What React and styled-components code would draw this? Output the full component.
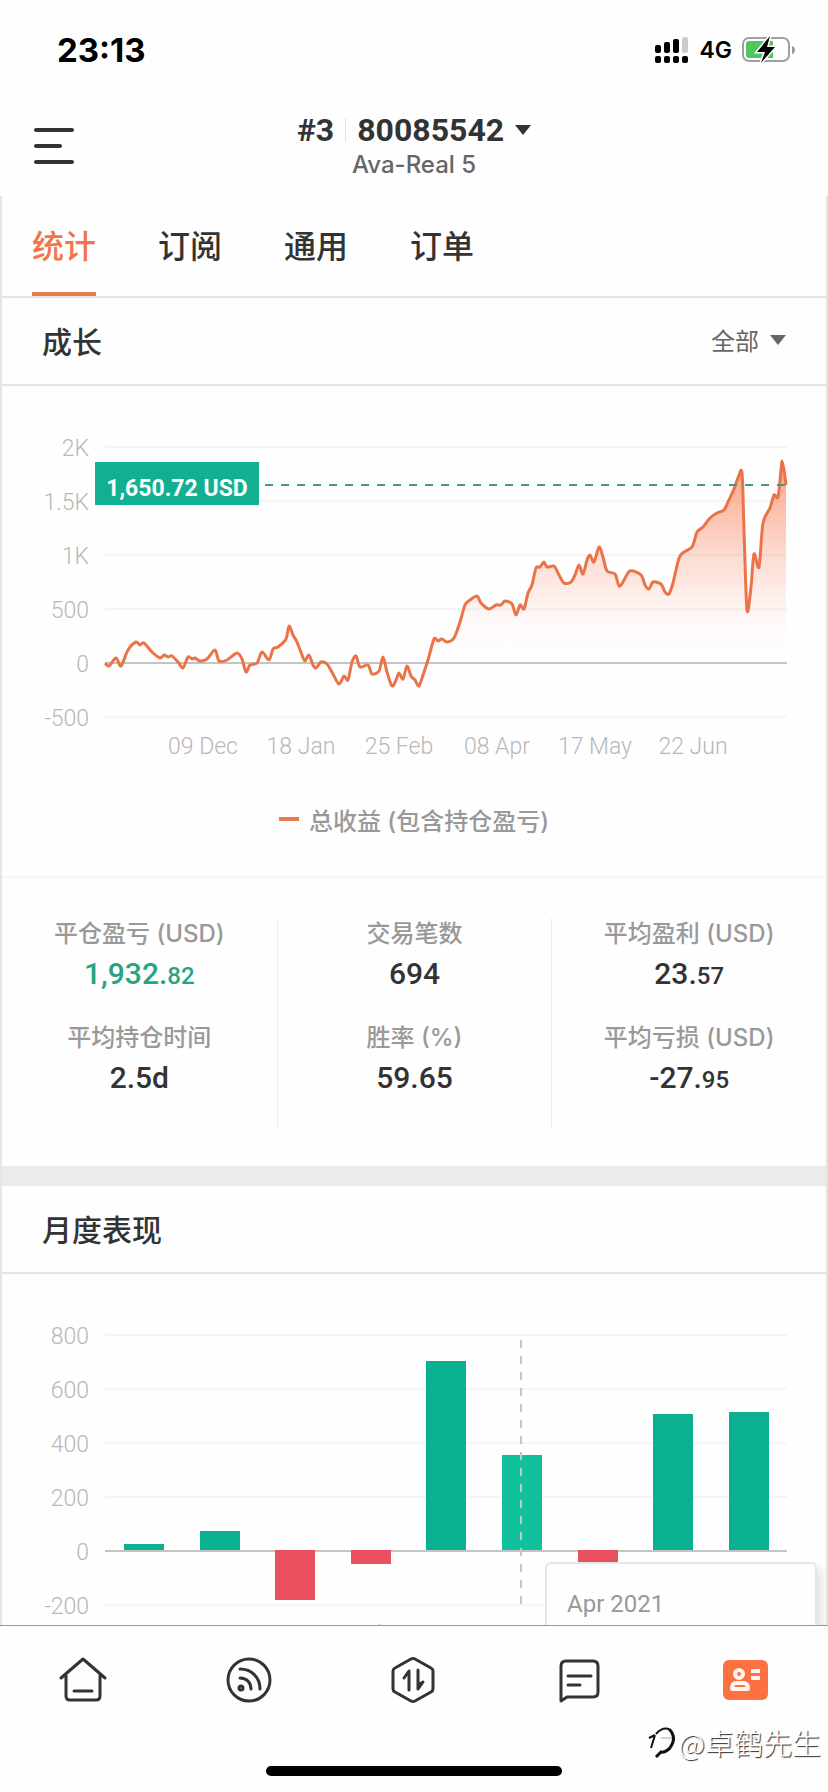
import React, { useState } from 'react';
import styled, { createGlobalStyle } from 'styled-components';

const GlobalStyle = createGlobalStyle`
  *, *::before, *::after { box-sizing: border-box; }
  body {
    margin: 0;
    background: #fefefe;
    color: #333;
    font-family: 'Inter', 'Noto Sans CJK SC', sans-serif;
  }
  button {
    margin: 0;
    padding: 0;
    border: 0;
    background: none;
    color: inherit;
    font: inherit;
    cursor: pointer;
  }
`;

const numberFont = "'Roboto', 'Noto Sans CJK SC', sans-serif";

const Screen = styled.div`
  position: relative;
  display: flex;
  flex-direction: column;
  height: 100vh;
  overflow: hidden;
`;

const StatusBar = styled.div`
  display: flex;
  justify-content: space-between;
  align-items: center;
  flex: none;
  height: 100px;
  padding: 0 33px 0 57px;
  color: #000;
`;

const Clock = styled.time`
  font-size: 33px;
  font-weight: 700;
`;

const StatusIcons = styled.div`
  display: flex;
  align-items: center;
  gap: 10px;
  font-size: 23px;
  font-weight: 600;
`;

const Header = styled.header`
  display: grid;
  grid-template-columns: 1fr auto 1fr;
  align-items: center;
  flex: none;
  height: 96px;
  padding: 0 34px 4px;
`;

const MenuButton = styled.button`
  display: flex;
  flex-direction: column;
  gap: 12px;
  width: 40px;
`;

const MenuLine = styled.span`
  width: ${props => (props.$short ? '28px' : '40px')};
  height: 4px;
  border-radius: 2px;
  background: #333;
`;

const Account = styled.div`
  display: flex;
  flex-direction: column;
  align-items: center;
`;

const AccountButton = styled.button`
  display: flex;
  align-items: center;
  font-family: ${numberFont};
  font-size: 32px;
  line-height: 38px;
  font-weight: 700;
`;

const AccountDivider = styled.span`
  width: 1px;
  height: 24px;
  margin: 0 11px;
  background: #e2e2e2;
`;

const Caret = styled.span`
  width: 0;
  height: 0;
  margin-left: 11px;
  border: 8px solid transparent;
  border-top: 10px solid ${props => props.$color || '#333'};
  border-bottom: 0;
`;

const Server = styled.div`
  color: #666;
  font-size: 24px;
  line-height: 32px;
  font-weight: 500;
`;

const Content = styled.main`
  flex: 1;
  min-height: 0;
  overflow: hidden;
  border: solid #e5e5e5;
  border-width: 0 2px;
`;

const Tabs = styled.nav`
  display: flex;
  gap: 62px;
  height: 102px;
  padding: 0 30px;
  border-bottom: 2px solid #e5e5e5;
`;

const Tab = styled.button`
  border-bottom: 4px solid ${props => (props.$active ? '#e77a4f' : 'transparent')};
  color: ${props => (props.$active ? '#f2754a' : '#333')};
  font-size: 32px;
  font-weight: 500;
`;

const SectionHead = styled.div`
  display: flex;
  justify-content: space-between;
  align-items: center;
  height: 88px;
  padding: 0 40px 3px;
  border-bottom: 2px solid #e5e5e5;
`;

const SectionTitle = styled.h2`
  margin: 0;
  font-size: 30px;
  font-weight: 500;
`;

const RangeButton = styled.button`
  display: flex;
  align-items: center;
  color: #666;
  font-size: 24px;
`;

const Chart = styled.svg`
  display: block;
  width: 100%;
  height: auto;
  font-family: ${numberFont};
`;

const AxisText = styled.text`
  fill: #b8b8b8;
  font-size: 23px;
  font-weight: 300;
`;

const Legend = styled.div`
  display: flex;
  justify-content: center;
  align-items: center;
  gap: 10px;
  height: 112px;
  padding-bottom: 4px;
  border-bottom: 2px solid #f5f5f5;
  color: #999;
  font-size: 24px;
  font-weight: 500;
`;

const LegendMark = styled.span`
  width: 20px;
  height: 4px;
  background: #ea7850;
`;

const Stats = styled.section`
  display: grid;
  grid-template-columns: repeat(3, 1fr);
  padding: 40px 0 38px;
  border-bottom: 20px solid #ebebeb;
`;

const StatColumn = styled.dl`
  margin: 0;
  height: 210px;
  text-align: center;

  & + & {
    border-left: 1px solid #eee;
  }
`;

const StatLabel = styled.dt`
  height: 32px;
  color: #999;
  font-size: 24px;
  line-height: 32px;
  font-weight: 500;
`;

const StatValue = styled.dd`
  height: 48px;
  margin: 0 0 24px;
  color: ${props => (props.$positive ? '#27a583' : '#333')};
  font-family: ${numberFont};
  font-size: 30px;
  line-height: 48px;
  font-weight: 500;
`;

const Cents = styled.span`
  font-size: 24px;
`;

const MonthlyPlot = styled.div`
  position: relative;
`;

const Tooltip = styled.div`
  position: absolute;
  top: 288px;
  right: 9px;
  width: 33%;
  height: 160px;
  padding: 24px 20px;
  border: 2px solid #e6e6e6;
  border-radius: 6px;
  background: #fefefe;
  box-shadow: 6px 6px 10px rgba(0, 0, 0, 0.1);
  color: #999;
  font-family: ${numberFont};
  font-size: 24px;
  line-height: 32px;
`;

const BottomNav = styled.nav`
  display: grid;
  grid-template-columns: repeat(5, 1fr);
  justify-items: center;
  align-items: start;
  flex: none;
  height: 167px;
  padding-top: 27px;
  border-top: 1px solid #999;
`;

const NavButton = styled.button`
  width: 56px;
  height: 56px;
  color: #333;

  svg {
    display: block;
  }
`;

const HomeIndicator = styled.div`
  position: absolute;
  bottom: 16px;
  left: 50%;
  width: 296px;
  height: 10px;
  margin-left: -148px;
  border-radius: 5px;
  background: #000;
`;

const Watermark = styled.div`
  position: absolute;
  right: 7px;
  bottom: 30px;
  display: flex;
  align-items: center;
  gap: 3px;
  color: #fff;
  font-family: 'Noto Sans CJK SC', sans-serif;
  font-size: 29px;
  line-height: 40px;
  font-weight: 300;
  text-shadow: 1px 1px 1px #222;
`;

const tabs = ['统计', '订阅', '通用', '订单'];

const growthPoints = [
  [103, 277], [107, 280], [114, 272], [119, 280], [126, 264], [134, 256], [138, 259], [142, 257],
  [150, 266], [158, 272], [162, 269], [166, 271], [170, 270], [176, 276], [181, 282], [186, 271],
  [190, 273], [193, 272], [198, 275], [205, 273], [213, 264], [217, 275], [225, 274], [235, 267],
  [240, 273], [244, 286], [248, 279], [255, 277], [260, 266], [267, 274], [271, 263], [276, 261],
  [284, 253], [287, 240], [291, 249], [295, 256], [300, 269], [303, 275], [307, 269], [311, 279],
  [314, 282], [319, 276], [325, 278], [331, 288], [337, 298], [342, 290], [346, 294], [350, 276],
  [354, 270], [358, 281], [366, 279], [370, 288], [377, 285], [381, 271], [385, 286], [390, 300],
  [394, 294], [397, 287], [401, 293], [405, 280], [409, 290], [413, 294], [417, 300], [421, 289],
  [426, 274], [432, 253], [436, 255], [440, 253], [445, 256], [452, 252], [458, 236], [463, 219],
  [468, 214], [475, 210], [479, 217], [487, 223], [494, 219], [499, 219], [503, 215], [510, 218],
  [514, 229], [518, 219], [522, 223], [526, 207], [530, 199], [534, 182], [538, 181], [542, 176],
  [545, 181], [552, 180], [556, 187], [562, 197], [569, 196], [573, 189], [577, 179], [581, 188],
  [585, 174], [588, 169], [592, 176], [597, 161], [601, 171], [605, 185], [613, 188], [617, 200],
  [621, 196], [628, 185], [639, 189], [643, 199], [647, 203], [651, 196], [659, 198], [663, 206],
  [667, 208], [671, 197], [678, 170], [690, 161], [695, 146], [701, 141], [708, 132], [715, 127],
  [722, 124], [726, 116], [732, 103], [736, 92], [740, 87], [742, 144], [745, 224], [749, 201],
  [752, 168], [757, 181], [761, 137], [768, 122], [772, 109], [776, 111], [779, 84], [780, 75],
  [782, 84], [784, 99],
];

const growthTicks = ['2K', '1.5K', '1K', '500', '0', '-500'];
const growthDates = ['09 Dec', '18 Jan', '25 Feb', '08 Apr', '17 May', '22 Jun'];

const monthTicks = ['800', '600', '400', '200', '0', '-200'];
const months = [
  { name: 'Nov', value: 23 },
  { name: 'Dec', value: 72 },
  { name: 'Jan', value: -186 },
  { name: 'Feb', value: -52 },
  { name: 'Mar', value: 699 },
  { name: 'Apr', value: 353, active: true },
  { name: 'May', value: -60 },
  { name: 'Jun', value: 504 },
  { name: 'Jul', value: 511 },
];

const stats = [
  [
    { label: '平仓盈亏 (USD)', value: '1,932.', cents: '82', positive: true },
    { label: '平均持仓时间', value: '2.5d' },
  ],
  [
    { label: '交易笔数', value: '694' },
    { label: '胜率 (%)', value: '59.65' },
  ],
  [
    { label: '平均盈利 (USD)', value: '23.', cents: '57' },
    { label: '平均亏损 (USD)', value: '-27.', cents: '95' },
  ],
];

// Turns the points into a smooth path
const smoothPath = points => {
  let d = `M${points[0][0]} ${points[0][1]}`;
  for (let i = 0; i < points.length - 1; i++) {
    const a = points[i - 1] || points[i];
    const b = points[i];
    const c = points[i + 1];
    const e = points[i + 2] || c;
    d += `C${b[0] + (c[0] - a[0]) / 7} ${b[1] + (c[1] - a[1]) / 7} `;
    d += `${c[0] - (e[0] - b[0]) / 7} ${c[1] - (e[1] - b[1]) / 7} ${c[0]} ${c[1]}`;
  }
  return d;
};

const SignalIcon = () => (
  <svg width="34" height="28" viewBox="0 0 34 28" fill="#000" aria-label="signal">
    <rect x="0" y="9" width="6" height="8" rx="2" />
    <rect x="9" y="6" width="6" height="11" rx="2" />
    <rect x="18" y="3" width="6" height="14" rx="2" />
    <rect x="27" y="1" width="6" height="16" rx="2" fill="#ccc" />
    {[0, 9, 18, 27].map(x => <rect key={x} x={x} y="20" width="6" height="7" rx="2" />)}
  </svg>
);

const BatteryIcon = () => (
  <svg width="53" height="28" viewBox="0 0 53 28" aria-label="battery">
    <rect x="1" y="2" width="46" height="23" rx="6" fill="#fff" stroke="#a0a0a0" strokeWidth="2" />
    <path d="M7 5H31V22H7Q4 22 4 19V8Q4 5 7 5Z" fill="#4cc764" />
    <path d="M50 10Q53 11 53 14Q53 17 50 18Z" fill="#999" />
    <path d="M28 0L15 16H23L19 27L33 11H25Z" fill="#000" stroke="#fff" strokeWidth="3" paintOrder="stroke" />
  </svg>
);

const GrowthChart = () => {
  const line = smoothPath(growthPoints);
  return (
    <Chart viewBox="0 0 824 380" role="img" aria-label="成长">
      <defs>
        <linearGradient id="growth" gradientUnits="userSpaceOnUse" x1="0" y1="75" x2="0" y2="277">
          <stop offset="0" stopColor="#f97d56" stopOpacity="0.72" />
          <stop offset="0.5" stopColor="#f97d56" stopOpacity="0.24" />
          <stop offset="0.8" stopColor="#f97d56" stopOpacity="0.03" />
          <stop offset="1" stopColor="#f97d56" stopOpacity="0" />
        </linearGradient>
      </defs>
      {growthTicks.map((tick, i) => (
        <g key={tick}>
          <AxisText x="87" y={70 + i * 54} textAnchor="end">{tick}</AxisText>
          <path d={`M103 ${61 + i * 54}H785`} stroke="#f5f5f5" strokeWidth="2" />
        </g>
      ))}
      <path d={`${line}V277H103Z`} fill="url(#growth)" />
      <path d="M103 277H785" stroke="#c4c4c4" strokeWidth="2" />
      <path d={line} fill="none" stroke="#ea7348" strokeWidth="3" strokeLinejoin="round" />
      <path d="M263 99H784" stroke="#48977f" strokeWidth="2" strokeDasharray="8 8" />
      <rect x="93" y="76" width="164" height="43" fill="#12af90" />
      <text x="175" y="110" textAnchor="middle" fill="#fff" fontSize="23" fontWeight="700">1,650.72 USD</text>
      {growthDates.map((date, i) => (
        <AxisText key={date} x={201 + i * 98} y="368" textAnchor="middle">{date}</AxisText>
      ))}
    </Chart>
  );
};

const MonthlyChart = () => (
  <Chart viewBox="0 0 824 380" role="img" aria-label="月度表现">
    {monthTicks.map((tick, i) => (
      <g key={tick}>
        <AxisText x="87" y={70 + i * 54} textAnchor="end">{tick}</AxisText>
        <path d={`M103 ${61 + i * 54}H785`} stroke={tick === '0' ? '#c4c4c4' : '#f5f5f5'} strokeWidth="2" />
      </g>
    ))}
    {months.map(({ name, value, active }, i) => {
      const x = Math.round(122 + i * 75.6);
      const height = Math.round(Math.abs(value) * 0.27);
      const color = value < 0 ? '#e95060' : active ? '#0fc09b' : '#0bb091';
      return (
        <g key={name}>
          <rect x={x} y={value < 0 ? 276 : 276 - height} width="40" height={height} fill={color} />
          <AxisText x={x + 20} y="368" textAnchor="middle">{name}</AxisText>
        </g>
      );
    })}
    <path d="M519 66V331" stroke="#c6c6c6" strokeWidth="2" strokeDasharray="8 8" />
  </Chart>
);

const iconProps = {
  width: 56,
  height: 56,
  viewBox: '0 0 56 56',
  fill: 'none',
  stroke: 'currentColor',
  strokeWidth: 3,
  strokeLinecap: 'round',
  strokeLinejoin: 'round',
};

const HomeIcon = () => (
  <svg {...iconProps}>
    <path d="M6 25L28 6L50 25M11 22V43Q11 47 15 47H41Q45 47 45 43V22M19 38H37" />
  </svg>
);

const SignalsIcon = () => (
  <svg {...iconProps}>
    <circle cx="29" cy="27" r="21" />
    <path d="M20 16C32 16 40 25 40 36M20 25C27 25 31 30 31 36" />
    <circle cx="21" cy="35" r="2" />
  </svg>
);

const TradeIcon = () => (
  <svg {...iconProps}>
    <path d="M25 6Q27 5 29 6L45 15Q47 16 47 18V36Q47 38 45 39L29 48Q27 49 25 48L9 39Q7 38 7 36V18Q7 16 9 15Z" />
    <path d="M18 25L23 18V37M32 17V36L37 29L32 32" />
  </svg>
);

const MessageIcon = () => (
  <svg {...iconProps}>
    <path d="M9 47V13Q9 8 14 8H41Q46 8 46 13V39Q46 44 41 44H15L9 48ZM16 23H39M16 32H28" />
  </svg>
);

const ProfileIcon = () => (
  <svg {...iconProps}>
    <rect x="6" y="7" width="45" height="40" rx="6" fill="#fc7142" stroke="none" />
    <g stroke="#fff4ee" strokeWidth="4" strokeLinecap="butt">
      <circle cx="22" cy="21" r="4" />
      <path d="M15 36Q15 30 19 30H26Q31 30 31 36ZM34 18H43M34 25H43" />
    </g>
  </svg>
);

const navItems = [
  { label: '首页', Icon: HomeIcon },
  { label: '信号', Icon: SignalsIcon },
  { label: '交易', Icon: TradeIcon },
  { label: '消息', Icon: MessageIcon },
  { label: '我的', Icon: ProfileIcon },
];

const App = () => {
  const [activeTab, setActiveTab] = useState('统计');

  return (
    <Screen>
      <GlobalStyle />

      <StatusBar>
        <Clock>23:13</Clock>
        <StatusIcons>
          <SignalIcon />
          <span>4G</span>
          <BatteryIcon />
        </StatusIcons>
      </StatusBar>

      <Header>
        <MenuButton aria-label="菜单">
          <MenuLine />
          <MenuLine $short />
          <MenuLine />
        </MenuButton>
        <Account>
          <AccountButton>
            #3
            <AccountDivider />
            80085542
            <Caret />
          </AccountButton>
          <Server>Ava-Real 5</Server>
        </Account>
      </Header>

      <Content>
        <Tabs>
          {tabs.map(tab => (
            <Tab key={tab} $active={tab === activeTab} onClick={() => setActiveTab(tab)}>
              {tab}
            </Tab>
          ))}
        </Tabs>

        {/* Growth */}
        <SectionHead>
          <SectionTitle>成长</SectionTitle>
          <RangeButton>
            全部
            <Caret $color="#666" />
          </RangeButton>
        </SectionHead>
        <GrowthChart />
        <Legend>
          <LegendMark />
          总收益 (包含持仓盈亏)
        </Legend>

        {/* Account statistics */}
        <Stats>
          {stats.map(column => (
            <StatColumn key={column[0].label}>
              {column.map(({ label, value, cents, positive }) => (
                <React.Fragment key={label}>
                  <StatLabel>{label}</StatLabel>
                  <StatValue $positive={positive}>
                    {value}
                    {cents && <Cents>{cents}</Cents>}
                  </StatValue>
                </React.Fragment>
              ))}
            </StatColumn>
          ))}
        </Stats>

        {/* Monthly performance */}
        <SectionHead>
          <SectionTitle>月度表现</SectionTitle>
        </SectionHead>
        <MonthlyPlot>
          <MonthlyChart />
          <Tooltip>Apr 2021</Tooltip>
        </MonthlyPlot>
      </Content>

      <BottomNav>
        {navItems.map(({ label, Icon }) => (
          <NavButton key={label} aria-label={label}>
            <Icon />
          </NavButton>
        ))}
      </BottomNav>

      <HomeIndicator />
      <Watermark>
        <svg width="28" height="34" viewBox="0 0 28 34" fill="none" stroke="#111">
          <path d="M1 13L7 10M7 10L3 23M8 9Q14 2 21 4" strokeWidth="2" />
          <path d="M21 4Q30 13 21 24Q16 28 13 27L8 32" strokeWidth="3" />
          <path d="M13 13H24" stroke="#aaa" />
        </svg>
        <span>@卓鹤先生</span>
      </Watermark>
    </Screen>
  );
};

export default App;
